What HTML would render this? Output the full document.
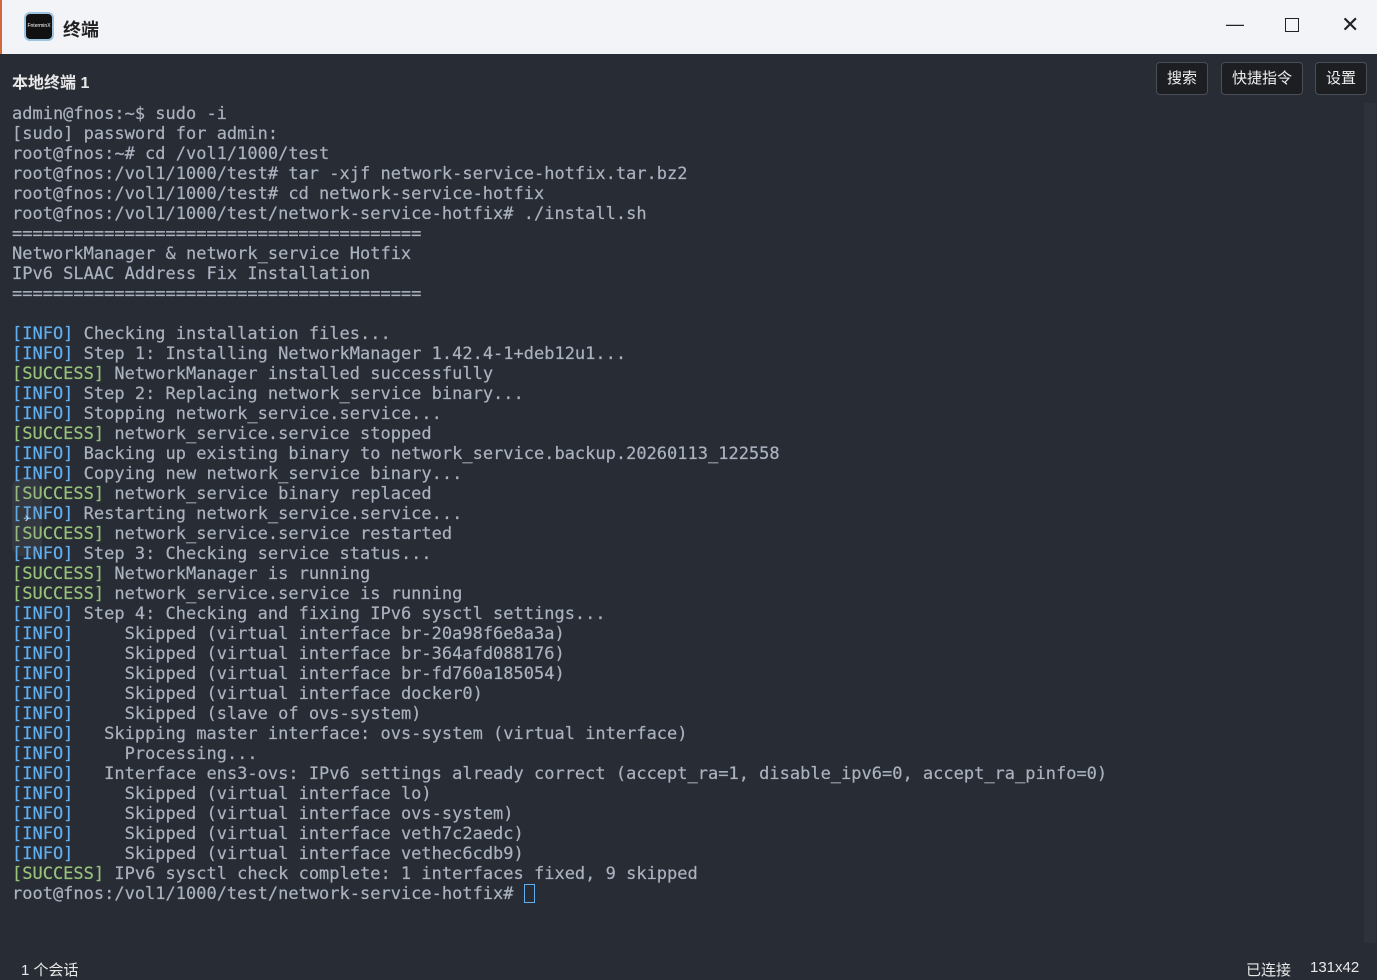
<!DOCTYPE html>
<html><head><meta charset="utf-8"><style>
*{margin:0;padding:0;box-sizing:border-box}
body{width:1377px;height:979px;overflow:hidden;background:#282c34;font-family:"Liberation Sans","Noto Sans CJK SC",sans-serif;position:relative}
#tb{position:absolute;left:0;top:0;width:1377px;height:54px;background:#f3f4f8;border-left:2px solid #d06a3a}
#logo{position:absolute;left:22px;top:12px;width:30px;height:29px;border-radius:6px;background:#111;border:2px solid #9cc3e0;color:#fff;font-size:5px;line-height:25px;text-align:center}
#title{position:absolute;left:61px;top:16px;font-size:18px;font-weight:bold;color:#222}
.wc{position:absolute;top:14px;color:#222;font-size:18px}
#bar{position:absolute;left:12px;top:69px;font-size:16px;font-weight:bold;color:#e8e8e8}
.btn{position:absolute;top:62px;height:33px;border:1px solid #4a4e56;border-radius:4px;background:#1c1e22;color:#eee;font-size:15px;line-height:31px;text-align:center}
#term{position:absolute;left:12px;top:104px;font-family:"DejaVu Sans Mono","Liberation Mono",monospace;font-size:17px;line-height:20px;color:#abb2bf;white-space:pre;-webkit-text-stroke:0.2px}
.i{color:#61afef}.s{color:#98c379}
#cur{display:inline-block;width:11px;height:19px;border:1px solid #61afef;vertical-align:-4px}
#sb{position:absolute;left:1364px;top:103px;width:12px;height:840px;background:#2e323a}
.st{position:absolute;top:959px;font-size:15px;color:#e8e8e8}
#tog{position:absolute;left:12px;top:478px;width:30px;height:78px;border-radius:10px;background:rgba(120,130,140,0.15);color:#ddd;text-align:center;line-height:78px;font-size:14px}
</style></head><body>
<div id="tb"><div id="logo">FnterminX</div><div id="title">终端</div>
<div class="wc" style="left:1224px">—</div>
<div class="wc" style="left:1283px;top:18px;width:14px;height:14px;border:1.5px solid #222"></div>
<div class="wc" style="left:1339px;top:12px;font-size:22px">✕</div></div>
<div id="bar">本地终端 1</div>
<div class="btn" style="left:1156px;width:52px">搜索</div>
<div class="btn" style="left:1221px;width:82px">快捷指令</div>
<div class="btn" style="left:1315px;width:52px">设置</div>
<div id="sb"></div>
<div id="term">admin@fnos:~$ sudo -i
[sudo] password for admin:
root@fnos:~# cd /vol1/1000/test
root@fnos:/vol1/1000/test# tar -xjf network-service-hotfix.tar.bz2
root@fnos:/vol1/1000/test# cd network-service-hotfix
root@fnos:/vol1/1000/test/network-service-hotfix# ./install.sh
========================================
NetworkManager &amp; network_service Hotfix
IPv6 SLAAC Address Fix Installation
========================================

<span class="i">[INFO]</span> Checking installation files...
<span class="i">[INFO]</span> Step 1: Installing NetworkManager 1.42.4-1+deb12u1...
<span class="s">[SUCCESS]</span> NetworkManager installed successfully
<span class="i">[INFO]</span> Step 2: Replacing network_service binary...
<span class="i">[INFO]</span> Stopping network_service.service...
<span class="s">[SUCCESS]</span> network_service.service stopped
<span class="i">[INFO]</span> Backing up existing binary to network_service.backup.20260113_122558
<span class="i">[INFO]</span> Copying new network_service binary...
<span class="s">[SUCCESS]</span> network_service binary replaced
<span class="i">[INFO]</span> Restarting network_service.service...
<span class="s">[SUCCESS]</span> network_service.service restarted
<span class="i">[INFO]</span> Step 3: Checking service status...
<span class="s">[SUCCESS]</span> NetworkManager is running
<span class="s">[SUCCESS]</span> network_service.service is running
<span class="i">[INFO]</span> Step 4: Checking and fixing IPv6 sysctl settings...
<span class="i">[INFO]</span>     Skipped (virtual interface br-20a98f6e8a3a)
<span class="i">[INFO]</span>     Skipped (virtual interface br-364afd088176)
<span class="i">[INFO]</span>     Skipped (virtual interface br-fd760a185054)
<span class="i">[INFO]</span>     Skipped (virtual interface docker0)
<span class="i">[INFO]</span>     Skipped (slave of ovs-system)
<span class="i">[INFO]</span>   Skipping master interface: ovs-system (virtual interface)
<span class="i">[INFO]</span>     Processing...
<span class="i">[INFO]</span>   Interface ens3-ovs: IPv6 settings already correct (accept_ra=1, disable_ipv6=0, accept_ra_pinfo=0)
<span class="i">[INFO]</span>     Skipped (virtual interface lo)
<span class="i">[INFO]</span>     Skipped (virtual interface ovs-system)
<span class="i">[INFO]</span>     Skipped (virtual interface veth7c2aedc)
<span class="i">[INFO]</span>     Skipped (virtual interface vethec6cdb9)
<span class="s">[SUCCESS]</span> IPv6 sysctl check complete: 1 interfaces fixed, 9 skipped
root@fnos:/vol1/1000/test/network-service-hotfix# <span id="cur"></span></div>
<div id="tog">›</div>
<div class="st" style="left:21px">1 个会话</div>
<div class="st" style="left:1246px">已连接</div>
<div class="st" style="left:1310px">131x42</div>
</body></html>
